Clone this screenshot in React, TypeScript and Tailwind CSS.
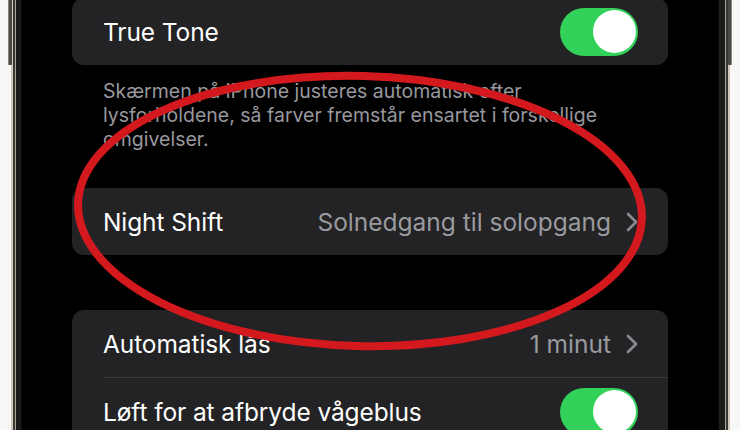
import React from 'react';

const font = { fontFamily: 'Inter, "Noto Sans", sans-serif' };

function Toggle() {
  return (
    <div className="w-[78px] h-[48px] rounded-full bg-[#32d15a] flex items-center justify-end pr-[2px] shrink-0">
      <div className="w-[43px] h-[43px] rounded-full bg-white" />
    </div>
  );
}

function Chevron() {
  return (
    <svg width="12" height="20" viewBox="0 0 12 20" className="shrink-0 ml-[15px]">
      <polyline points="2,2 10,10 2,18" fill="none" stroke="#8a8a8f" strokeWidth="2.6" strokeLinecap="round" strokeLinejoin="round" />
    </svg>
  );
}

interface RowProps {
  label: string;
  value?: string;
  toggle?: boolean;
}

function Row({ label, value, toggle }: RowProps) {
  return (
    <div className="h-[67px] flex items-center justify-between pr-[30px]">
      <span className="text-[24.5px] text-white tracking-[-0.1px] pt-[2px]">{label}</span>
      {toggle ? (
        <Toggle />
      ) : (
        <div className="flex items-center">
          <span className="text-[24.5px] text-[#9a9a9f] tracking-[0px] pt-[2px]">{value}</span>
          <Chevron />
        </div>
      )}
    </div>
  );
}

function Bezel({ side }: { side: 'left' | 'right' }) {
  const stripes =
    side === 'left'
      ? ['w-[11px] bg-[#f7f7f5]', 'w-[2px] bg-[#cfc8bb]', 'w-[2px] bg-[#3a3834]', 'w-[1px] bg-[#a9a398]', 'w-[5px] bg-[#1a1a19]', 'w-[1px] bg-[#0a0a0a]']
      : ['w-[1px] bg-[#0a0a0a]', 'w-[6px] bg-[#1c1c1b]', 'w-[1px] bg-[#a9a398]', 'w-[2px] bg-[#3a3834]', 'w-[2px] bg-[#cfc8bb]', 'w-[10px] bg-[#f7f7f5]'];
  return (
    <div className="relative flex shrink-0 h-full">
      {stripes.map((s, i) => (
        <div key={i} className={`${s} h-full`} />
      ))}
      {side === 'left' ? (
        <div className="absolute left-[8px] top-0 w-[4px] h-[65px] bg-[#4a4843] border-l border-[#8c877d] rounded-b-[1px]" />
      ) : (
        <div className="absolute right-[8px] top-0 w-[4px] h-[65px] bg-[#4a4843] border-r border-[#8c877d] rounded-b-[1px]" />
      )}
    </div>
  );
}

export default function App() {
  return (
    <div className="w-[740px] h-[430px] overflow-hidden bg-white flex" style={font}>
      <Bezel side="left" />
      <div className="relative flex-1 h-full bg-black overflow-hidden px-[50px]">
        <div className="-mt-[2px] bg-[#232325] rounded-[12px] pl-[31px]">
          <Row label="True Tone" toggle />
        </div>
        <p className="pl-[31px] pr-[10px] pt-[14px] text-[19.5px] leading-[24px] text-[#98989e] whitespace-nowrap">
          Skærmen på iPhone justeres automatisk efter
          <br />
          lysforholdene, så farver fremstår ensartet i forskellige
          <br />
          omgivelser.
        </p>
        <div className="mt-[37px] bg-[#232325] rounded-[12px] pl-[31px]">
          <Row label="Night Shift" value="Solnedgang til solopgang" />
        </div>
        <div className="mt-[55px] bg-[#232325] rounded-[12px] pl-[31px]">
          <Row label="Automatisk lås" value="1 minut" />
          <div className="h-px bg-[#3a3a3c]" />
          <Row label="Løft for at afbryde vågeblus" toggle />
        </div>
        <svg className="absolute left-0 top-0 pointer-events-none" width="696" height="430" viewBox="0 0 696 430">
          <ellipse
            cx="338"
            cy="211"
            rx="282"
            ry="135"
            fill="none"
            stroke="#d3191e"
            strokeWidth="8"
            transform="rotate(1.5 338 211)"
          />
        </svg>
      </div>
      <Bezel side="right" />
    </div>
  );
}
